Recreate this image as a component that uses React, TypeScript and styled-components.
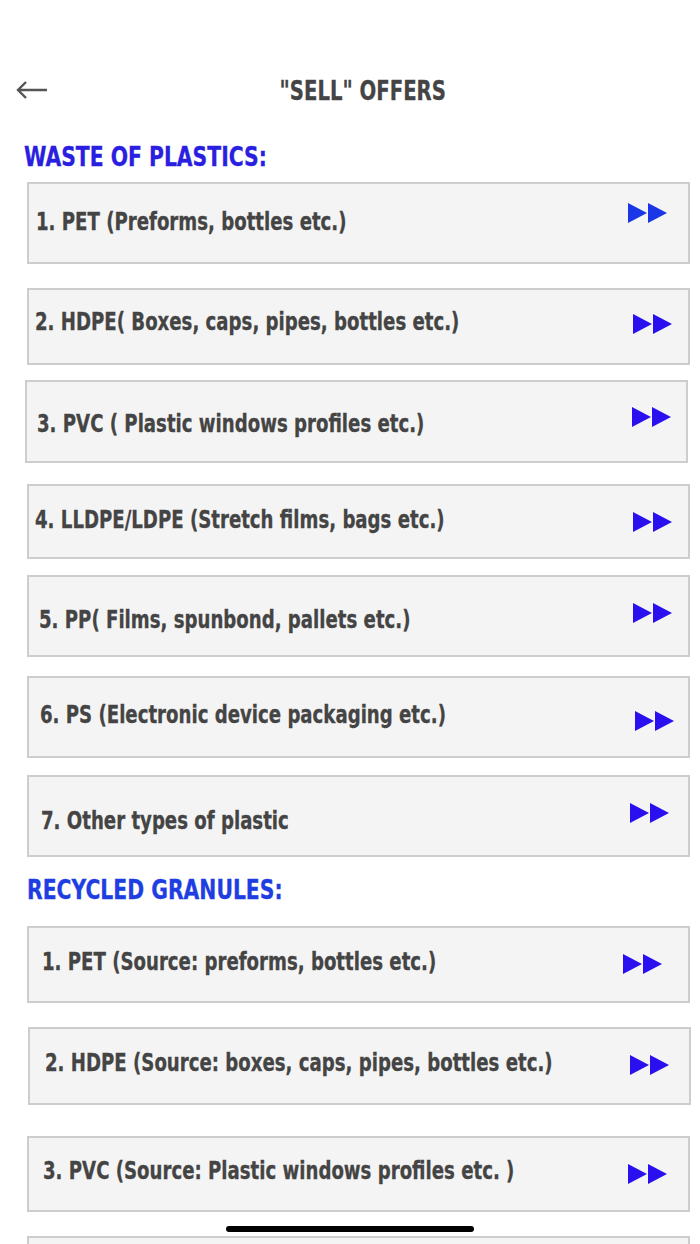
import React from "react";
import styled, { createGlobalStyle } from "styled-components";

const GlobalStyle = createGlobalStyle`
  html, body {
    margin: 0;
    padding: 0;
    background: #fff;
  }
  body {
    font-family: "DejaVu Sans Condensed", "Liberation Sans", sans-serif;
    font-weight: 700;
    color: #444;
  }
`;

const Page = styled.div`
  width: 700px;
  height: 1244px;
  overflow: hidden;
  position: relative;
`;

const TopBar = styled.div`
  display: flex;
  align-items: center;
  height: 40px;
  margin-top: 70px;
  padding-left: 16px;
`;

const BackButton = styled.button`
  border: none;
  background: none;
  padding: 0;
  display: flex;
  align-items: center;
  cursor: pointer;
`;

const Title = styled.h1`
  flex: 1;
  margin: 0 0 0 -47px;
  padding-left: 25px;
  text-align: center;
  font-size: 27px;
  font-weight: 700;
  color: #444;
  -webkit-text-stroke: 0.3px #444;
`;

const Narrow = styled.span<{ $scale: number; $origin?: string }>`
  display: inline-block;
  white-space: nowrap;
  transform: scaleX(${(p) => p.$scale});
  transform-origin: ${(p) => p.$origin ?? "left"} center;
`;

const SectionTitle = styled.h2<{ $top: number; $left: number; $color: string }>`
  margin: ${(p) => p.$top}px 0 0 ${(p) => p.$left}px;
  font-size: 26px;
  line-height: 30px;
  height: 30px;
  font-weight: 700;
  color: ${(p) => p.$color};
  -webkit-text-stroke: 0.3px ${(p) => p.$color};
`;

const Card = styled.div<{
  $top: number;
  $left: number;
  $height: number;
}>`
  box-sizing: border-box;
  margin: ${(p) => p.$top}px 0 0 ${(p) => p.$left}px;
  width: 663px;
  height: ${(p) => p.$height}px;
  background: #f4f4f4;
  border: 2px solid #cdcdcd;
  display: flex;
  align-items: flex-start;
  cursor: pointer;
`;

const Label = styled.div<{ $top: number; $left: number }>`
  flex: 1 1 0;
  min-width: 0;
  margin: ${(p) => p.$top}px 0 0 ${(p) => p.$left}px;
  font-size: 24px;
  line-height: 26px;
  color: #444;
  -webkit-text-stroke: 0.3px #444;
`;

const Arrow = styled.svg<{ $top: number; $right: number }>`
  margin: ${(p) => p.$top}px ${(p) => p.$right}px 0 0;
  flex-shrink: 0;
`;

const HomeIndicator = styled.div`
  position: absolute;
  left: 226px;
  bottom: 12px;
  width: 248px;
  height: 6px;
  border-radius: 3px;
  background: #000;
`;

type Item = {
  label: string;
  top: number;
  left: number;
  height: number;
  textTop: number;
  textLeft: number;
  arrowTop: number;
  arrowRight: number;
  color?: string;
};

const waste: Item[] = [
  { label: "1. PET (Preforms, bottles etc.)", top: 10, left: 27, height: 82, textTop: 25, textLeft: 7, arrowTop: 19, arrowRight: 20, color: "#1b36e6" },
  { label: "2. HDPE( Boxes, caps, pipes, bottles etc.)", top: 24, left: 27, height: 77, textTop: 19, textLeft: 6, arrowTop: 24, arrowRight: 15 },
  { label: "3. PVC ( Plastic windows profiles etc.)", top: 15, left: 25, height: 83, textTop: 29, textLeft: 10, arrowTop: 25, arrowRight: 14 },
  { label: "4. LLDPE/LDPE (Stretch films, bags etc.)", top: 21, left: 27, height: 75, textTop: 21, textLeft: 6, arrowTop: 26, arrowRight: 15 },
  { label: "5. PP( Films, spunbond, pallets etc.)", top: 16, left: 27, height: 82, textTop: 30, textLeft: 10, arrowTop: 26, arrowRight: 15 },
  { label: "6. PS (Electronic device packaging etc.)", top: 19, left: 27, height: 82, textTop: 24, textLeft: 11, arrowTop: 33, arrowRight: 13 },
  { label: "7. Other types of plastic", top: 17, left: 27, height: 82, textTop: 31, textLeft: 12, arrowTop: 26, arrowRight: 18 },
];

const granules: Item[] = [
  { label: "1. PET (Source: preforms, bottles etc.)", top: 21, left: 27, height: 77, textTop: 21, textLeft: 13, arrowTop: 26, arrowRight: 25 },
  { label: "2. HDPE (Source: boxes, caps, pipes, bottles etc.)", top: 24, left: 28, height: 78, textTop: 21, textLeft: 15, arrowTop: 26, arrowRight: 19 },
  { label: "3. PVC (Source: Plastic windows profiles etc. )", top: 31, left: 27, height: 76, textTop: 20, textLeft: 14, arrowTop: 26, arrowRight: 20 },
  { label: "", top: 24, left: 27, height: 75, textTop: 20, textLeft: 14, arrowTop: 26, arrowRight: 20 },
];

const ForwardIcon = ({ top, right, color }: { top: number; right: number; color: string }) => (
  <Arrow $top={top} $right={right} width="40" height="20" viewBox="0 0 40 20">
    <polygon points="0,0 19,10 0,20" fill={color} />
    <polygon points="20,0 39,10 20,20" fill={color} />
  </Arrow>
);

const Row = ({ item }: { item: Item }) => (
  <Card $top={item.top} $left={item.left} $height={item.height}>
    <Label $top={item.textTop} $left={item.textLeft}>
      <Narrow $scale={0.84}>{item.label}</Narrow>
    </Label>
    {item.label && (
      <ForwardIcon top={item.arrowTop} right={item.arrowRight} color={item.color ?? "#2a10ee"} />
    )}
  </Card>
);

export default function App() {
  return (
    <Page>
      <GlobalStyle />
      <TopBar>
        <BackButton aria-label="Back">
          <svg width="32" height="20" viewBox="0 0 32 20">
            <path d="M2 10 H31 M10 2 L2 10 L10 18" fill="none" stroke="#555" strokeWidth="2.4" />
          </svg>
        </BackButton>
        <Title>
          <Narrow $scale={0.81} $origin="center">"SELL" OFFERS</Narrow>
        </Title>
      </TopBar>
      <SectionTitle $top={32} $left={24} $color="#2a1fe0">
        <Narrow $scale={0.87}>WASTE OF PLASTICS:</Narrow>
      </SectionTitle>
      {waste.map((item) => (
        <Row key={item.label} item={item} />
      ))}
      <SectionTitle $top={18} $left={27} $color="#1f3ee2">
        <Narrow $scale={0.87}>RECYCLED GRANULES:</Narrow>
      </SectionTitle>
      {granules.map((item, i) => (
        <Row key={i} item={item} />
      ))}
      <HomeIndicator />
    </Page>
  );
}
